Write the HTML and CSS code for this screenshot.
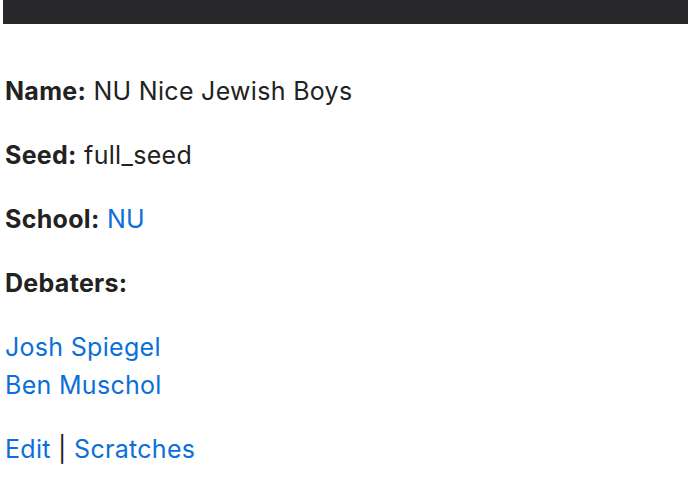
FILE: index.html
```html
<!DOCTYPE html>
<html>
<head>
<meta charset="utf-8">
<link rel="stylesheet" href="styles.css">
</head>
<body>
<div class="topbar"></div>
<main class="content">
  <p><strong>Name:</strong> NU Nice Jewish Boys</p>
  <p><strong>Seed:</strong> full_seed</p>
  <p><strong>School:</strong> <a href="#">NU</a></p>
  <p><strong>Debaters:</strong></p>
  <p><a href="#">Josh Spiegel</a><br><a href="#">Ben Muschol</a></p>
  <p><a href="#">Edit</a> | <a href="#">Scratches</a></p>
</main>
</body>
</html>
```
FILE: styles.css
```css
html, body {
  margin: 0;
  padding: 0;
  background: #fff;
}
body {
  font-family: Inter, "Liberation Sans", Arial, sans-serif;
  font-size: 25px;
  letter-spacing: 0.3px;
  line-height: 38px;
  color: #222;
}
.topbar {
  height: 24px;
  margin-left: 3px;
  background: #29292b;
}
.content {
  padding: 48px 5px 0;
}
.content p {
  margin: 0 0 26px;
}
.content strong {
  font-weight: 700;
}
.content a {
  color: #0b6fd8;
  text-decoration: none;
}
```
